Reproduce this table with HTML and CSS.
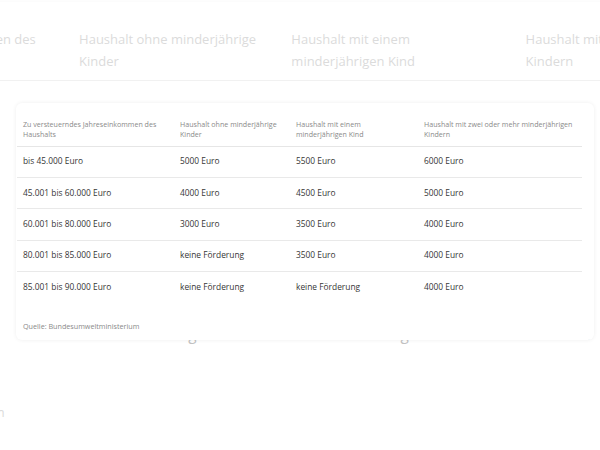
FILE: index.html
```html
<!DOCTYPE html>
<html lang="de">
<head>
<meta charset="utf-8">
<title>Förderung</title>
<link rel="stylesheet" href="styles.css">
</head>
<body>
<div class="stage">
  <div class="panel panel-bg" aria-hidden="true">
    <table class="grid">
      <colgroup><col class="c1"><col class="c2"><col class="c3"><col class="c4"></colgroup>
      <thead>
        <tr><th>Zu versteuerndes Jahreseinkommen des<br>Haushalts</th><th>Haushalt ohne minderjährige<br>Kinder</th><th>Haushalt mit einem<br>minderjährigen Kind</th><th>Haushalt mit zwei oder mehr minderjährigen<br>Kindern</th></tr>
      </thead>
      <tbody>
        <tr><td>bis 45.000 Euro</td><td>5000 Euro</td><td>5500 Euro</td><td>6000 Euro</td></tr>
        <tr><td>45.001 bis 60.000 Euro</td><td>4000 Euro</td><td>4500 Euro</td><td>5000 Euro</td></tr>
        <tr><td>60.001 bis 80.000 Euro</td><td>3000 Euro</td><td>3500 Euro</td><td>4000 Euro</td></tr>
        <tr><td>80.001 bis 85.000 Euro</td><td>keine Förderung</td><td>3500 Euro</td><td>4000 Euro</td></tr>
        <tr><td>85.001 bis 90.000 Euro</td><td>keine Förderung</td><td>keine Förderung</td><td>4000 Euro</td></tr>
      </tbody>
    </table>
    <p class="source">Quelle: Bundesumweltministerium</p>
  </div>
  <div class="panel panel-fg">
    <table class="grid">
      <colgroup><col class="c1"><col class="c2"><col class="c3"><col class="c4"></colgroup>
      <thead>
        <tr><th>Zu versteuerndes Jahreseinkommen des<br>Haushalts</th><th>Haushalt ohne minderjährige<br>Kinder</th><th>Haushalt mit einem<br>minderjährigen Kind</th><th>Haushalt mit zwei oder mehr minderjährigen<br>Kindern</th></tr>
      </thead>
      <tbody>
        <tr><td>bis 45.000 Euro</td><td>5000 Euro</td><td>5500 Euro</td><td>6000 Euro</td></tr>
        <tr><td>45.001 bis 60.000 Euro</td><td>4000 Euro</td><td>4500 Euro</td><td>5000 Euro</td></tr>
        <tr><td>60.001 bis 80.000 Euro</td><td>3000 Euro</td><td>3500 Euro</td><td>4000 Euro</td></tr>
        <tr><td>80.001 bis 85.000 Euro</td><td>keine Förderung</td><td>3500 Euro</td><td>4000 Euro</td></tr>
        <tr><td>85.001 bis 90.000 Euro</td><td>keine Förderung</td><td>keine Förderung</td><td>4000 Euro</td></tr>
      </tbody>
    </table>
    <p class="source">Quelle: Bundesumweltministerium</p>
  </div>
</div>
</body>
</html>
```
FILE: styles.css
```css
html, body {
  margin: 0;
  padding: 0;
  background: #fff;
  overflow: hidden;
  width: 600px;
  height: 450px;
}

.stage {
  position: relative;
  width: 600px;
  height: 450px;
  overflow: hidden;
}

/* --u scales widths and type; vertical rhythm has its own values */
.panel {
  --u: 1px;
  --head-top: 15.75px;
  --head-lh: 10.5px;
  --head-bot: 6px;
  --row-h: 31.3px;
  --row-shift: 0px;
  --src-top: 18.5px;
  --src-lh: 10px;
  --line: #e9e9e9;
  box-sizing: border-box;
  width: calc(577 * var(--u));
  height: 237px;
  padding-left: calc(1 * var(--u));
  background: #fff;
  border-radius: calc(6 * var(--u));
  box-shadow: 0 0 4px rgba(0, 0, 0, 0.07);
  font-family: "Open Sans", "Noto Sans", sans-serif;
}

.panel-bg {
  --u: 1.83px;
  --head-top: 26px;
  --head-lh: 22px;
  --head-bot: 8px;
  --row-h: 55.4px;
  --row-shift: 10px;
  --src-top: 46px;
  --src-lh: 18px;
  --line: transparent;
  height: 700px;
  margin: 2px 0 0 -221px;
  opacity: 0.3;
}

.panel-bg .grid th {
  border-bottom-color: #d4d4d4;
}

.panel-bg .grid td:last-child {
  letter-spacing: -0.8px;
}

.panel-fg {
  position: absolute;
  left: 16px;
  top: 103px;
  width: 578px;
}

.grid {
  border-collapse: collapse;
  table-layout: fixed;
  width: calc(565 * var(--u));
}

.c1 { width: calc(157 * var(--u)); }
.c2 { width: calc(116 * var(--u)); }
.c3 { width: calc(128 * var(--u)); }
.c4 { width: calc(164 * var(--u)); }

.grid th {
  font-size: calc(7.1 * var(--u));
  line-height: var(--head-lh);
  font-weight: 400;
  color: #8a8a8a;
  text-align: left;
  vertical-align: top;
  white-space: nowrap;
  padding: var(--head-top) 0 var(--head-bot) calc(6 * var(--u));
  border-bottom: 1px solid #e6e6e6;
}

.grid td {
  box-sizing: border-box;
  font-size: calc(8.4 * var(--u));
  line-height: 1.3;
  height: var(--row-h);
  color: #363636;
  white-space: nowrap;
  vertical-align: middle;
  padding: var(--row-shift) 0 0 calc(6 * var(--u));
  border-bottom: 1px solid var(--line);
}

.grid tbody tr:last-child td {
  border-bottom: none;
}

.source {
  margin: var(--src-top) 0 0 calc(6 * var(--u));
  font-size: calc(7.2 * var(--u));
  line-height: var(--src-lh);
  color: #8a8a8a;
}
```
